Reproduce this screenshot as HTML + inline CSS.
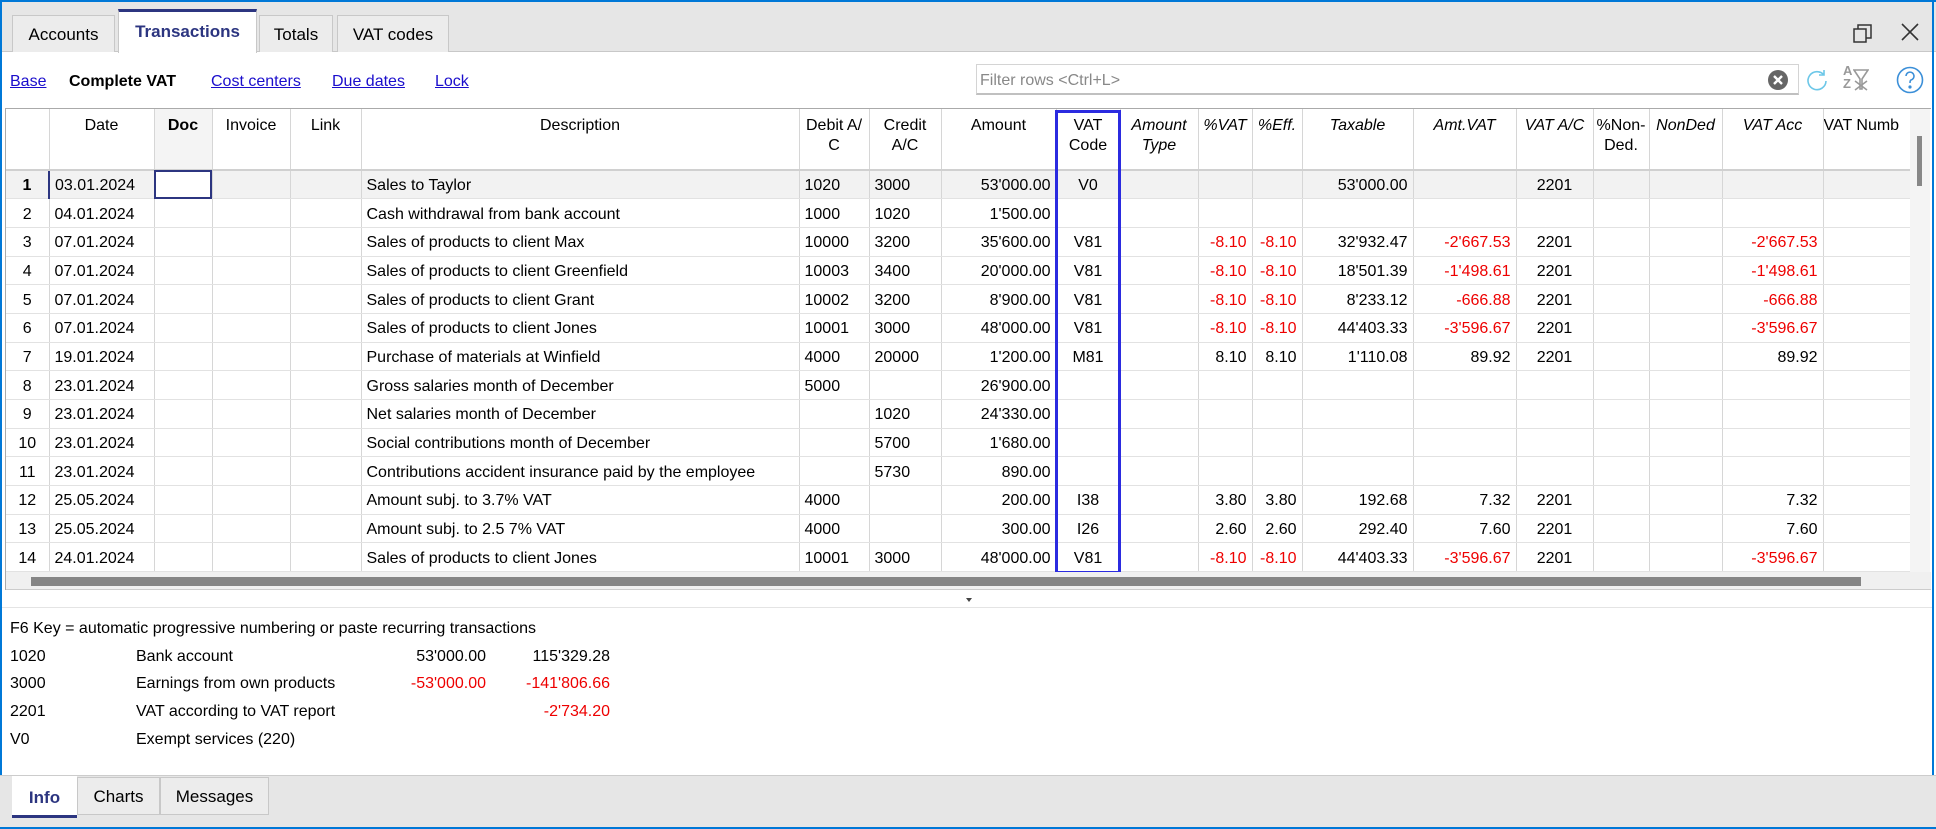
<!DOCTYPE html>
<html><head><meta charset="utf-8"><style>
*{box-sizing:border-box;margin:0;padding:0}
body{width:1936px;height:829px;overflow:hidden;background:#fff;font-family:"Liberation Sans",Arial,sans-serif;font-size:16px;color:#000;position:relative}
.a{position:absolute}
.tab{position:absolute;top:15px;height:37px;border:1px solid #c8c8c8;border-bottom:none;background:#ececec;font-size:17px;text-align:center;line-height:38px}
.lnk{position:absolute;top:73px;color:#1a0dcc;text-decoration:underline;font-size:16px}
table{position:absolute;left:6px;top:109px;border-collapse:collapse;table-layout:fixed;width:1904px}
td,th{border-right:1px solid #d6d6d6;border-bottom:1px solid #e2e2e2;height:28.7px;padding:3px 5px 0;white-space:nowrap;overflow:hidden;font-weight:normal}
th{height:61px;vertical-align:top;text-align:center;line-height:20px;padding-top:7px;background:#fff;white-space:normal;border-bottom:2px solid #d0d0d0}
th.i{font-style:italic}
td.r{text-align:right}td.c{text-align:center}
td.n{text-align:center;color:#000}
.red{color:#e00}
tr.sel td{background:#f2f2f2}
.info{position:absolute;font-size:16px}
</style></head><body>
<div class="a" style="left:0;top:0;width:1936px;height:52px;background:#e6e6e6;border-bottom:1px solid #c8c8c8"></div>
<div class="tab" style="left:12px;width:103px">Accounts</div>
<div class="tab" style="left:118px;top:9px;height:44px;width:139px;background:#fff;border-top:3px solid #2c3580;font-weight:bold;color:#2c3580;line-height:40px">Transactions</div>
<div class="tab" style="left:259px;width:74px">Totals</div>
<div class="tab" style="left:337px;width:112px">VAT codes</div>
<svg class="a" style="left:1852px;top:22px" width="22" height="22" viewBox="0 0 22 22" fill="none" stroke="#333" stroke-width="1.5"><rect x="2" y="7" width="12" height="13"/><path d="M6 7V3h13v13h-5"/></svg>
<svg class="a" style="left:1900px;top:22px" width="20" height="20" viewBox="0 0 20 20" stroke="#333" stroke-width="1.6"><path d="M2 2l16 16M18 2L2 18"/></svg>
<div class="a" style="left:0;top:0;width:2px;height:829px;background:#0078d7"></div>
<div class="a" style="left:1932px;top:0;width:2px;height:829px;background:#0078d7"></div>
<div class="a" style="left:0;top:0;width:1936px;height:2px;background:#0078d7"></div>
<div class="a" style="left:0;top:827px;width:1936px;height:2px;background:#0078d7"></div>

<span class="lnk" style="left:10px">Base</span>
<span class="a" style="left:69px;top:73px;font-weight:bold">Complete VAT</span>
<span class="lnk" style="left:211px">Cost centers</span>
<span class="lnk" style="left:332px">Due dates</span>
<span class="lnk" style="left:435px">Lock</span>
<div class="a" style="left:976px;top:64px;width:823px;height:31px;border:1px solid #d4d4d4;border-bottom:2px solid #c0c0c0;color:#888;font-size:16px;line-height:31px;padding-left:3px">Filter rows &lt;Ctrl+L&gt;</div>
<svg class="a" style="left:1767px;top:69px" width="22" height="22" viewBox="0 0 22 22"><circle cx="11" cy="11" r="10" fill="#666"/><path d="M7 7l8 8M15 7l-8 8" stroke="#fff" stroke-width="2.4"/></svg>
<svg class="a" style="left:1805px;top:68px" width="24" height="24" viewBox="0 0 24 24" fill="none" stroke="#6cc7e8" stroke-width="1.6"><path d="M19 7A9 9 0 1 0 21 13"/><path d="M19 2v5h-5"/></svg>
<div class="a" style="left:1843px;top:64px;font-size:13px;color:#999;line-height:13px;font-weight:bold">A<br>Z</div>
<svg class="a" style="left:1853px;top:67px" width="16" height="24" viewBox="0 0 16 24" fill="none" stroke="#999" stroke-width="1.6"><path d="M1 3h14L9 12v10H7V12z"/><path d="M2 14l12 9M14 14L2 23"/></svg>
<svg class="a" style="left:1896px;top:65px" width="28" height="30" viewBox="0 0 28 30" fill="none" stroke="#3b8fd8" stroke-width="1.6"><circle cx="14" cy="15" r="12.5"/><path d="M10 11a4 4 0 1 1 5 4c-1 .5-1 1.5-1 3"/><circle cx="14" cy="22" r=".8" fill="#3b8fd8"/></svg>

<div class="a" style="left:5px;top:108px;width:1926px;height:1px;background:#aaa"></div>
<table>
<colgroup><col style="width:43px"><col style="width:105px"><col style="width:58px"><col style="width:78px"><col style="width:71px"><col style="width:438px"><col style="width:70px"><col style="width:72px"><col style="width:115px"><col style="width:64px"><col style="width:78px"><col style="width:54px"><col style="width:50px"><col style="width:111px"><col style="width:103px"><col style="width:77px"><col style="width:56px"><col style="width:73px"><col style="width:101px"><col style="width:87px"></colgroup>
<tr><th></th><th>Date</th><th style="font-weight:bold;background:#f4f4f4">Doc</th><th>Invoice</th><th>Link</th><th>Description</th><th style="padding:7px 0 0">Debit A/ C</th><th style="padding:7px 0 0">Credit A/C</th><th>Amount</th><th>VAT Code</th><th class="i">Amount Type</th><th class="i" style="padding:7px 0 0">%VAT</th><th class="i">%Eff.</th><th class="i">Taxable</th><th class="i">Amt.VAT</th><th class="i" style="padding:7px 0 0">VAT A/C</th><th style="padding:7px 0 0">%Non-Ded.</th><th class="i" style="padding:7px 0 0">NonDed</th><th class="i">VAT Acc</th><th style="padding:7px 0 0;text-align:left;white-space:nowrap">VAT Numb</th></tr>
<tr class="sel"><td class="n" style="font-weight:bold;border-right:2px solid #2c3580">1</td><td>03.01.2024</td><td style="background:#fff;outline:2px solid #2c3580;outline-offset:-2px"></td><td></td><td></td><td>Sales to Taylor</td><td>1020</td><td>3000</td><td class="r">53'000.00</td><td class="c">V0</td><td></td><td></td><td></td><td class="r">53'000.00</td><td></td><td class="c">2201</td><td></td><td></td><td></td><td></td></tr>
<tr><td class="n">2</td><td>04.01.2024</td><td></td><td></td><td></td><td>Cash withdrawal from bank account</td><td>1000</td><td>1020</td><td class="r">1'500.00</td><td></td><td></td><td></td><td></td><td></td><td></td><td></td><td></td><td></td><td></td><td></td></tr>
<tr><td class="n">3</td><td>07.01.2024</td><td></td><td></td><td></td><td>Sales of products to client Max</td><td>10000</td><td>3200</td><td class="r">35'600.00</td><td class="c">V81</td><td></td><td class="r red">-8.10</td><td class="r red">-8.10</td><td class="r">32'932.47</td><td class="r red">-2'667.53</td><td class="c">2201</td><td></td><td></td><td class="r red">-2'667.53</td><td></td></tr>
<tr><td class="n">4</td><td>07.01.2024</td><td></td><td></td><td></td><td>Sales of products to client Greenfield</td><td>10003</td><td>3400</td><td class="r">20'000.00</td><td class="c">V81</td><td></td><td class="r red">-8.10</td><td class="r red">-8.10</td><td class="r">18'501.39</td><td class="r red">-1'498.61</td><td class="c">2201</td><td></td><td></td><td class="r red">-1'498.61</td><td></td></tr>
<tr><td class="n">5</td><td>07.01.2024</td><td></td><td></td><td></td><td>Sales of products to client Grant</td><td>10002</td><td>3200</td><td class="r">8'900.00</td><td class="c">V81</td><td></td><td class="r red">-8.10</td><td class="r red">-8.10</td><td class="r">8'233.12</td><td class="r red">-666.88</td><td class="c">2201</td><td></td><td></td><td class="r red">-666.88</td><td></td></tr>
<tr><td class="n">6</td><td>07.01.2024</td><td></td><td></td><td></td><td>Sales of products to client Jones</td><td>10001</td><td>3000</td><td class="r">48'000.00</td><td class="c">V81</td><td></td><td class="r red">-8.10</td><td class="r red">-8.10</td><td class="r">44'403.33</td><td class="r red">-3'596.67</td><td class="c">2201</td><td></td><td></td><td class="r red">-3'596.67</td><td></td></tr>
<tr><td class="n">7</td><td>19.01.2024</td><td></td><td></td><td></td><td>Purchase of materials at Winfield</td><td>4000</td><td>20000</td><td class="r">1'200.00</td><td class="c">M81</td><td></td><td class="r">8.10</td><td class="r">8.10</td><td class="r">1'110.08</td><td class="r">89.92</td><td class="c">2201</td><td></td><td></td><td class="r">89.92</td><td></td></tr>
<tr><td class="n">8</td><td>23.01.2024</td><td></td><td></td><td></td><td>Gross salaries month of December</td><td>5000</td><td></td><td class="r">26'900.00</td><td></td><td></td><td></td><td></td><td></td><td></td><td></td><td></td><td></td><td></td><td></td></tr>
<tr><td class="n">9</td><td>23.01.2024</td><td></td><td></td><td></td><td>Net salaries month of December</td><td></td><td>1020</td><td class="r">24'330.00</td><td></td><td></td><td></td><td></td><td></td><td></td><td></td><td></td><td></td><td></td><td></td></tr>
<tr><td class="n">10</td><td>23.01.2024</td><td></td><td></td><td></td><td>Social contributions month of December</td><td></td><td>5700</td><td class="r">1'680.00</td><td></td><td></td><td></td><td></td><td></td><td></td><td></td><td></td><td></td><td></td><td></td></tr>
<tr><td class="n">11</td><td>23.01.2024</td><td></td><td></td><td></td><td style="text-overflow:clip">Contributions accident insurance paid by the employee</td><td></td><td>5730</td><td class="r">890.00</td><td></td><td></td><td></td><td></td><td></td><td></td><td></td><td></td><td></td><td></td><td></td></tr>
<tr><td class="n">12</td><td>25.05.2024</td><td></td><td></td><td></td><td>Amount subj. to 3.7% VAT</td><td>4000</td><td></td><td class="r">200.00</td><td class="c">I38</td><td></td><td class="r">3.80</td><td class="r">3.80</td><td class="r">192.68</td><td class="r">7.32</td><td class="c">2201</td><td></td><td></td><td class="r">7.32</td><td></td></tr>
<tr><td class="n">13</td><td>25.05.2024</td><td></td><td></td><td></td><td>Amount subj. to 2.5 7% VAT</td><td>4000</td><td></td><td class="r">300.00</td><td class="c">I26</td><td></td><td class="r">2.60</td><td class="r">2.60</td><td class="r">292.40</td><td class="r">7.60</td><td class="c">2201</td><td></td><td></td><td class="r">7.60</td><td></td></tr>
<tr><td class="n">14</td><td>24.01.2024</td><td></td><td></td><td></td><td>Sales of products to client Jones</td><td>10001</td><td>3000</td><td class="r">48'000.00</td><td class="c">V81</td><td></td><td class="r red">-8.10</td><td class="r red">-8.10</td><td class="r">44'403.33</td><td class="r red">-3'596.67</td><td class="c">2201</td><td></td><td></td><td class="r red">-3'596.67</td><td></td></tr>
</table>
<div class="a" style="left:1055px;top:110px;width:66px;height:464px;border:3px solid #2b2be0"></div>
<div class="a" style="left:5px;top:108px;width:1px;height:482px;background:#aaa"></div>
<div class="a" style="left:1910px;top:109px;width:20px;height:463px;background:#f4f4f4"></div>
<div class="a" style="left:1917px;top:136px;width:5px;height:50px;background:#888"></div>
<div class="a" style="left:6px;top:572px;width:1925px;height:18px;background:#f0f0f0;border-bottom:1px solid #ccc"></div>
<div class="a" style="left:31px;top:577px;width:1830px;height:9px;background:#858585"></div>
<div class="a" style="left:2px;top:590px;width:1930px;height:18px;background:#fff;border-bottom:1px solid #e4e4e4"></div>
<div class="a" style="left:966px;top:598px;width:0;height:0;border-left:3px solid transparent;border-right:3px solid transparent;border-top:4px solid #444"></div>

<div class="info" style="left:10px;top:620px">F6 Key = automatic progressive numbering or paste recurring transactions</div>
<div class="info" style="left:10px;top:648px">1020</div><div class="info" style="left:136px;top:648px">Bank account</div><div class="info" style="right:1450px;top:648px">53'000.00</div><div class="info" style="right:1326px;top:648px">115'329.28</div>
<div class="info" style="left:10px;top:675px">3000</div><div class="info" style="left:136px;top:675px">Earnings from own products</div><div class="info red" style="right:1450px;top:675px">-53'000.00</div><div class="info red" style="right:1326px;top:675px">-141'806.66</div>
<div class="info" style="left:10px;top:703px">2201</div><div class="info" style="left:136px;top:703px">VAT according to VAT report</div><div class="info red" style="right:1326px;top:703px">-2'734.20</div>
<div class="info" style="left:10px;top:731px">V0</div><div class="info" style="left:136px;top:731px">Exempt services (220)</div>

<div class="a" style="left:0;top:775px;width:1936px;height:52px;background:#e6e6e6;border-top:1px solid #ccc"></div>
<div class="tab" style="left:12px;top:776px;height:42px;width:65px;background:#fff;border:none;border-bottom:3px solid #2c3580;font-weight:bold;color:#2c3580;line-height:44px">Info</div>
<div class="tab" style="left:77px;top:777px;height:38px;width:83px;border:1px solid #c8c8c8">Charts</div>
<div class="tab" style="left:160px;top:777px;height:38px;width:109px;border:1px solid #c8c8c8">Messages</div>
</body></html>
